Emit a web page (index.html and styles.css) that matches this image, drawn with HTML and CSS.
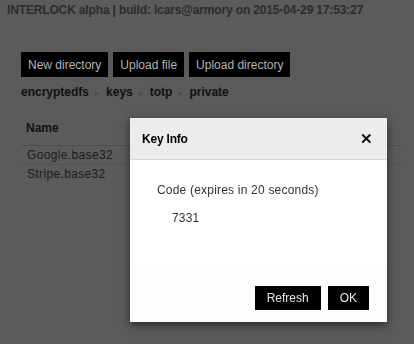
FILE: index.html
```html
<!DOCTYPE html>
<html lang="en">
<head>
    <meta charset="UTF-8">
    <title>INTERLOCK</title>
    <link rel="stylesheet" href="styles.css">
</head>
<body>
    <div id="header">INTERLOCK alpha | build: lcars@armory on 2015-04-29 17:53:27</div>
    <div id="main">
        <div class="toolbar">
            <button class="btn">New directory</button>
            <button class="btn">Upload file</button>
            <button class="btn">Upload directory</button>
        </div>
        <div class="breadcrumb">
            <span>encryptedfs</span><span class="sep">&#9656;</span><span>keys</span><span class="sep">&#9656;</span><span>totp</span><span class="sep">&#9656;</span><span>private</span>
        </div>
        <table class="files">
            <thead>
                <tr><th>Name</th></tr>
            </thead>
            <tbody>
                <tr><td>Google.base32</td></tr>
                <tr><td>Stripe.base32</td></tr>
            </tbody>
        </table>
    </div>

    <div class="modal">
        <div class="modal-header">
            <span class="modal-title">Key Info</span>
            <span class="modal-close">&#x2715;</span>
        </div>
        <div class="modal-body">
            <p>Code (expires in 20 seconds)</p>
            <p class="code">7331</p>
        </div>
        <div class="modal-footer">
            <button class="btn">Refresh</button>
            <button class="btn">OK</button>
        </div>
    </div>
</body>
</html>
```

FILE: styles.css
```css
body {
    margin: 0;
    padding: 0;
    background: #5b5b5b;
    color: #121212;
    font-family: "Liberation Sans", Arial, sans-serif;
    font-size: 12px;
}
#header {
    padding: 2px 7px 0;
    height: 16px;
    line-height: 16px;
    font-weight: bold;
    font-size: 12px;
    letter-spacing: -0.15px;
    color: #2c2c2c;
}
#main {
    padding: 34px 0 0 21px;
}
.toolbar {
    display: flex;
    gap: 5px;
}
.btn {
    background: #000;
    color: #b4b4b4;
    border: none;
    border-radius: 0;
    font-family: "Liberation Sans", Arial, sans-serif;
    font-size: 12px;
    height: 25px;
    padding: 0 7px;
    margin: 0;
    cursor: pointer;
}
.breadcrumb {
    margin-top: 6px;
    height: 18px;
    line-height: 18px;
    font-weight: bold;
    color: #111;
}
.breadcrumb .sep {
    color: #4a4a4a;
    font-size: 9px;
    font-weight: normal;
    padding: 0 6px;
}
.files {
    border-collapse: collapse;
    margin-top: 19px;
    width: 380px;
}
.files th {
    text-align: left;
    font-weight: bold;
    padding: 0 5px 9px;
    height: 16px;
    border-bottom: 1px solid #4d4d4d;
    color: #111;
}
.files td {
    padding: 0 6px;
    height: 18px;
    border-bottom: 1px solid #525252;
    color: #1c1c1c;
    letter-spacing: 0.35px;
}
.files tbody tr:last-child td {
    border-bottom: none;
}

/* finestra modale */
.modal {
    position: fixed;
    top: 118px;
    left: 130px;
    width: 257px;
    background: #fff;
    box-shadow: 0 3px 9px rgba(0, 0, 0, 0.55);
}
.modal-header {
    display: flex;
    justify-content: space-between;
    align-items: center;
    height: 41px;
    padding: 0 14px 0 12px;
    background: #ececec;
    border-bottom: 1px solid #d6d6d6;
}
.modal-title {
    font-weight: bold;
    color: #000;
    letter-spacing: -0.2px;
}
.modal-close {
    font-weight: bold;
    font-size: 15px;
    color: #111;
}
.modal-body {
    padding: 22px 27px 8px;
    height: 76px;
    color: #333;
    letter-spacing: 0.2px;
}
.modal-body p {
    margin: 0;
    line-height: 16px;
}
.modal-body .code {
    margin: 12px 0 0 15px;
}
.modal-footer {
    display: flex;
    justify-content: flex-end;
    gap: 7px;
    padding: 20px 18px 12px;
    background: #fdfdfd;
}
.modal-footer .btn {
    height: 24px;
    color: #e6e6e6;
    padding: 0 12px;
}
```
